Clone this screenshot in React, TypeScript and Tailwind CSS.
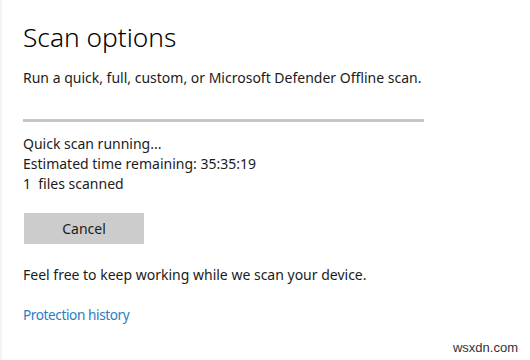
import { useState } from "react";

const stats = [
  "Quick scan running...",
  "Estimated time remaining: 35:35:19",
  "1  files scanned",
];

function App() {
  const [running] = useState(true);

  return (
    <div className="relative h-[360px] w-[530px] overflow-hidden bg-white font-['Noto_Sans',sans-serif] text-[#1b1b1b]">
      <div className="h-full border-l-2 border-[#f4f4f4] pl-[21px] pt-[19px]">
        <h1 className="text-[26.3px] font-light leading-[36px] text-black">
          Scan options
        </h1>
        <p className="mt-[13px] text-[14px] leading-[20px]">
          Run a quick, full, custom, or Microsoft Defender Offline scan.
        </p>

        <div className="mt-[31px] h-[3px] w-[401px] bg-[#c6c6c6]" />

        <div className="mt-[12px] text-[14px] leading-[20px]">
          {stats.map((line) => (
            <p key={line} className="whitespace-pre">
              {line}
            </p>
          ))}
        </div>

        {running && (
          <button className="ml-px mt-[19px] block h-[31px] w-[120px] bg-[#cccccc] text-[14px] text-[#1b1b1b]">
            Cancel
          </button>
        )}

        <p className="mt-[21px] text-[14px] leading-[20px]">
          Feel free to keep working while we scan your device.
        </p>

        <a className="mt-[20px] block text-[13.6px] leading-[20px] tracking-[-0.4px] text-[#2d7cc4]">
          Protection history
        </a>
      </div>

      <span className="absolute bottom-[3px] right-[12px] font-['Liberation_Sans',sans-serif] text-[13px] text-[#333]">
        wsxdn.com
      </span>
    </div>
  );
}

export default App;
